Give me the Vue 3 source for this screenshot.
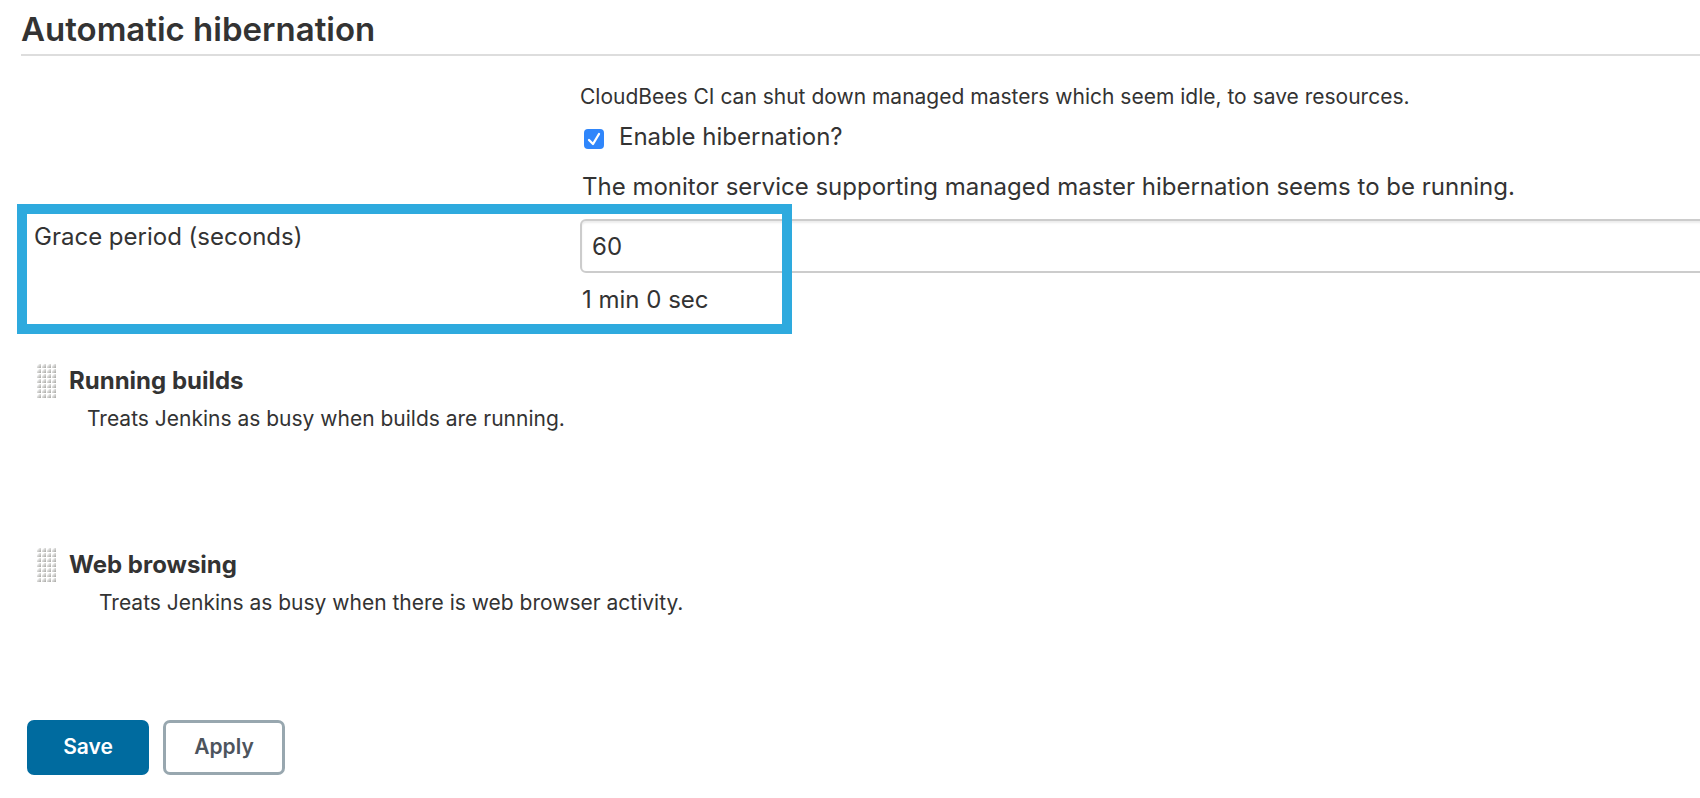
<script setup>
import { ref } from 'vue'

const enabled = ref(true)
const gracePeriod = ref('60')
const checks = [
  { id: 'builds', title: 'Running builds', text: 'Treats Jenkins as busy when builds are running.' },
  { id: 'web', title: 'Web browsing', text: 'Treats Jenkins as busy when there is web browser activity.' },
]
</script>

<template>
  <form class="page" @submit.prevent>
    <h1 class="title">Automatic hibernation</h1>

    <div class="intro">
      <p class="description">CloudBees CI can shut down managed masters which seem idle, to save resources.</p>
      <label class="toggle">
        <input v-model="enabled" class="toggle-input" type="checkbox" />
        <span>Enable hibernation?</span>
      </label>
      <p class="status">The monitor service supporting managed master hibernation seems to be running.</p>
    </div>

    <div class="setting">
      <label class="setting-label" for="grace">Grace period (seconds)</label>
      <div class="setting-field">
        <input id="grace" v-model="gracePeriod" class="text-input" type="text" />
        <p class="readout">1 min 0 sec</p>
      </div>
      <div class="highlight" aria-hidden="true"></div>
    </div>

    <section v-for="check in checks" :key="check.id" class="check" :class="check.id">
      <svg class="handle" width="20" height="35" viewBox="0 0 20 35" aria-hidden="true">
        <defs>
          <linearGradient :id="`dot-${check.id}`" x1="0" y1="0" x2="1" y2="1">
            <stop offset="0.1" stop-color="#fff" />
            <stop offset="0.9" stop-color="#adadaa" />
          </linearGradient>
        </defs>
        <template v-for="row in 7" :key="row">
          <path
            v-for="col in 4"
            :key="col"
            :d="`M${col * 5 - 4} ${row * 5 - 1}V${row * 5 - 3}L${col * 5 - 2} ${row * 5 - 5}H${col * 5}V${row * 5 - 1}Z`"
            :fill="`url(#dot-${check.id})`"
          />
        </template>
      </svg>
      <div>
        <h2 class="check-title">{{ check.title }}</h2>
        <p class="check-text">{{ check.text }}</p>
      </div>
    </section>

    <div class="actions">
      <button class="button primary" type="submit">Save</button>
      <button class="button" type="button">Apply</button>
    </div>
  </form>
</template>

<style>
body {
  background: #fff;
}
</style>

<style scoped>
.page {
  --field-start: 580px;
  box-sizing: border-box;
  padding: 9px 0 23px;
  overflow: hidden;
  color: #333;
  font-family: Inter, "Liberation Sans", sans-serif;
  font-size: 24px;
  line-height: 32px;
}

h1,
h2,
p {
  margin: 0;
}

.title {
  margin-left: 21px;
  padding-bottom: 5px;
  border-bottom: 2px solid #ddd;
  font-size: 33px;
  line-height: 40px;
  font-weight: 600;
}

.intro {
  display: flex;
  flex-direction: column;
  align-items: flex-start;
  padding: 27px 0 0 var(--field-start);
}

.description {
  font-size: 21px;
  line-height: 28px;
}

.toggle {
  display: flex;
  align-items: center;
  gap: 15px;
  margin: 10px 0 18px 4px;
}

.toggle-input {
  appearance: none;
  width: 20px;
  height: 20px;
  margin: 4px 0 0;
  border-radius: 4px;
  background: #2f86fb;
}

.toggle-input:checked {
  background-image: url("data:image/svg+xml,%3Csvg xmlns='http://www.w3.org/2000/svg' viewBox='0 0 20 20'%3E%3Cpath d='M5 11l4 4L15 5' fill='none' stroke='white' stroke-width='2.3' stroke-linecap='round' stroke-linejoin='round'/%3E%3C/svg%3E");
}

.status {
  padding-left: 2px;
}

.setting {
  position: relative;
  display: flex;
  padding-top: 16px;
}

.setting-label {
  box-sizing: border-box;
  flex: 0 0 var(--field-start);
  align-self: flex-start;
  padding: 2px 0 0 34px;
}

.setting-field {
  flex: 1;
  margin-right: -10px;
}

.text-input {
  display: block;
  box-sizing: border-box;
  width: 100%;
  height: 54px;
  padding: 0 10px;
  border: 2px solid #ccc;
  border-radius: 6px;
  background: #fff;
  box-shadow: inset 0 2px 2px rgba(0, 0, 0, 0.08);
  color: inherit;
  font: inherit;
}

.readout {
  padding: 11px 0 0 2px;
}

.highlight {
  position: absolute;
  top: 1px;
  left: 17px;
  box-sizing: border-box;
  width: 775px;
  height: 130px;
  border: 10px solid #2eaade;
}

.check {
  display: flex;
  gap: 13px;
  margin: 48px 0 0 36px;
}

.check + .check {
  margin-top: 115px;
}

.handle {
  flex: none;
}

.check-title {
  font-size: 24px;
  line-height: 34px;
  font-weight: 700;
}

.check-text {
  padding: 7px 0 0 18px;
  font-size: 21px;
  line-height: 28px;
}

.web .check-text {
  padding-left: 30px;
}

.actions {
  display: flex;
  gap: 14px;
  margin: 103px 0 0 27px;
}

.button {
  min-width: 122px;
  height: 55px;
  padding: 0 24px 2px;
  border: 3px solid #98a7af;
  border-radius: 7px;
  background: #fff;
  color: #4d545d;
  font: 600 21px/28px Inter, "Liberation Sans", sans-serif;
}

.primary {
  border-color: #006b9f;
  background: #006b9f;
  color: #fff;
}
</style>
